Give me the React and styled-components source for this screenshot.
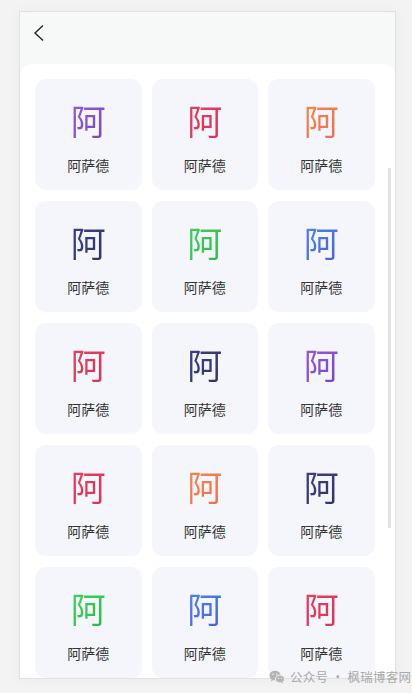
import React from 'react';
import styled, { createGlobalStyle } from 'styled-components';

const GlobalStyle = createGlobalStyle`
  html, body {
    margin: 0;
    padding: 0;
    background: #f3f3f3;
    font-family: 'Noto Sans CJK SC', 'Noto Sans', sans-serif;
  }
`;

const gradients = {
  purple: 'linear-gradient(135deg, #9a5ad8, #7446c4)',
  red: 'linear-gradient(135deg, #e8405c, #d2365e)',
  orange: 'linear-gradient(135deg, #f68a4c, #ea6f52)',
  navy: 'linear-gradient(135deg, #40408a, #2f3468)',
  green: 'linear-gradient(135deg, #44d35a, #2fb84e)',
  blue: 'linear-gradient(135deg, #5286ec, #4660d6)',
};

const items = [
  'purple', 'red', 'orange',
  'navy', 'green', 'blue',
  'red', 'navy', 'purple',
  'red', 'orange', 'navy',
  'green', 'blue', 'red',
];

const Page = styled.div`
  position: relative;
  height: 693px;
  padding: 11px 0 0 19px;
  box-sizing: border-box;
  overflow: hidden;
`;

const Phone = styled.div`
  width: 377px;
  height: 668px;
  box-sizing: border-box;
  border: 1px solid #e1e1e1;
  background: #f7f8f8;
  box-shadow: 0 0 12px rgba(0, 0, 0, 0.04);
  display: flex;
  flex-direction: column;
  overflow: hidden;
`;

const Header = styled.div`
  height: 52px;
  flex-shrink: 0;
  display: flex;
  align-items: flex-start;
  padding: 12px 0 0 13px;
  box-sizing: border-box;
`;

const BackButton = styled.button`
  border: 0;
  background: none;
  padding: 0;
  width: 14px;
  height: 18px;
  display: flex;
  align-items: center;
  cursor: pointer;
`;

const Content = styled.div`
  position: relative;
  flex: 1;
  background: #fff;
  border-radius: 12px 12px 0 0;
  padding: 15px 0 0 15px;
  overflow: hidden;
`;

const Grid = styled.div`
  display: grid;
  grid-template-columns: repeat(3, 106.5px);
  column-gap: 10px;
  row-gap: 11px;
`;

const Card = styled.div`
  height: 111px;
  background: #f5f6fb;
  border-radius: 11px;
  display: flex;
  flex-direction: column;
  align-items: center;
  padding-top: 20px;
  box-sizing: border-box;
`;

const Glyph = styled.span`
  font-size: 35px;
  line-height: 42px;
  font-weight: 400;
  background: ${(p) => p.$bg};
  -webkit-background-clip: text;
  background-clip: text;
  color: transparent;
`;

const Label = styled.span`
  margin-top: 14px;
  font-size: 14px;
  line-height: 20px;
  font-weight: 400;
  color: #333;
`;

const ScrollThumb = styled.div`
  position: absolute;
  right: 4px;
  top: 104px;
  width: 3px;
  height: 360px;
  background: #e2e2e2;
`;

const Watermark = styled.div`
  position: absolute;
  left: 269px;
  top: 667px;
  display: flex;
  align-items: center;
  gap: 5px;
  font-size: 12.5px;
  color: #a8a8a8;
  letter-spacing: 0.3px;
  white-space: nowrap;
`;

const WeChatIcon = () => (
  <svg width="16" height="14" viewBox="0 0 16 14">
    <ellipse cx="6" cy="5.5" rx="5.6" ry="4.8" fill="#b5b5b5" />
    <path d="M2.6 9 L2 11.4 L4.6 9.8 Z" fill="#b5b5b5" />
    <ellipse cx="11" cy="9" rx="4.6" ry="3.9" fill="#b5b5b5" stroke="#f3f3f3" strokeWidth="1" />
    <path d="M13.4 11.8 L14.2 13.6 L11.8 12.4 Z" fill="#b5b5b5" />
    <circle cx="4" cy="4.3" r="0.8" fill="#f3f3f3" />
    <circle cx="7.8" cy="4.3" r="0.8" fill="#f3f3f3" />
    <circle cx="9.5" cy="8.4" r="0.6" fill="#f3f3f3" />
    <circle cx="12.6" cy="8.4" r="0.6" fill="#f3f3f3" />
  </svg>
);

const App = () => (
  <>
    <GlobalStyle />
    <Page>
      <Phone>
        <Header>
          <BackButton aria-label="back">
            <svg width="12" height="18" viewBox="0 0 12 18">
              <polyline points="10,1.5 2,9 10,16.5" fill="none" stroke="#222" strokeWidth="1.4" />
            </svg>
          </BackButton>
        </Header>
        <Content>
          <Grid>
            {items.map((c, i) => (
              <Card key={i}>
                <Glyph $bg={gradients[c]}>阿</Glyph>
                <Label>阿萨德</Label>
              </Card>
            ))}
          </Grid>
          <ScrollThumb />
        </Content>
      </Phone>
      <Watermark>
        <WeChatIcon />
        <span>公众号 · 枫瑞博客网</span>
      </Watermark>
    </Page>
  </>
);

export default App;
